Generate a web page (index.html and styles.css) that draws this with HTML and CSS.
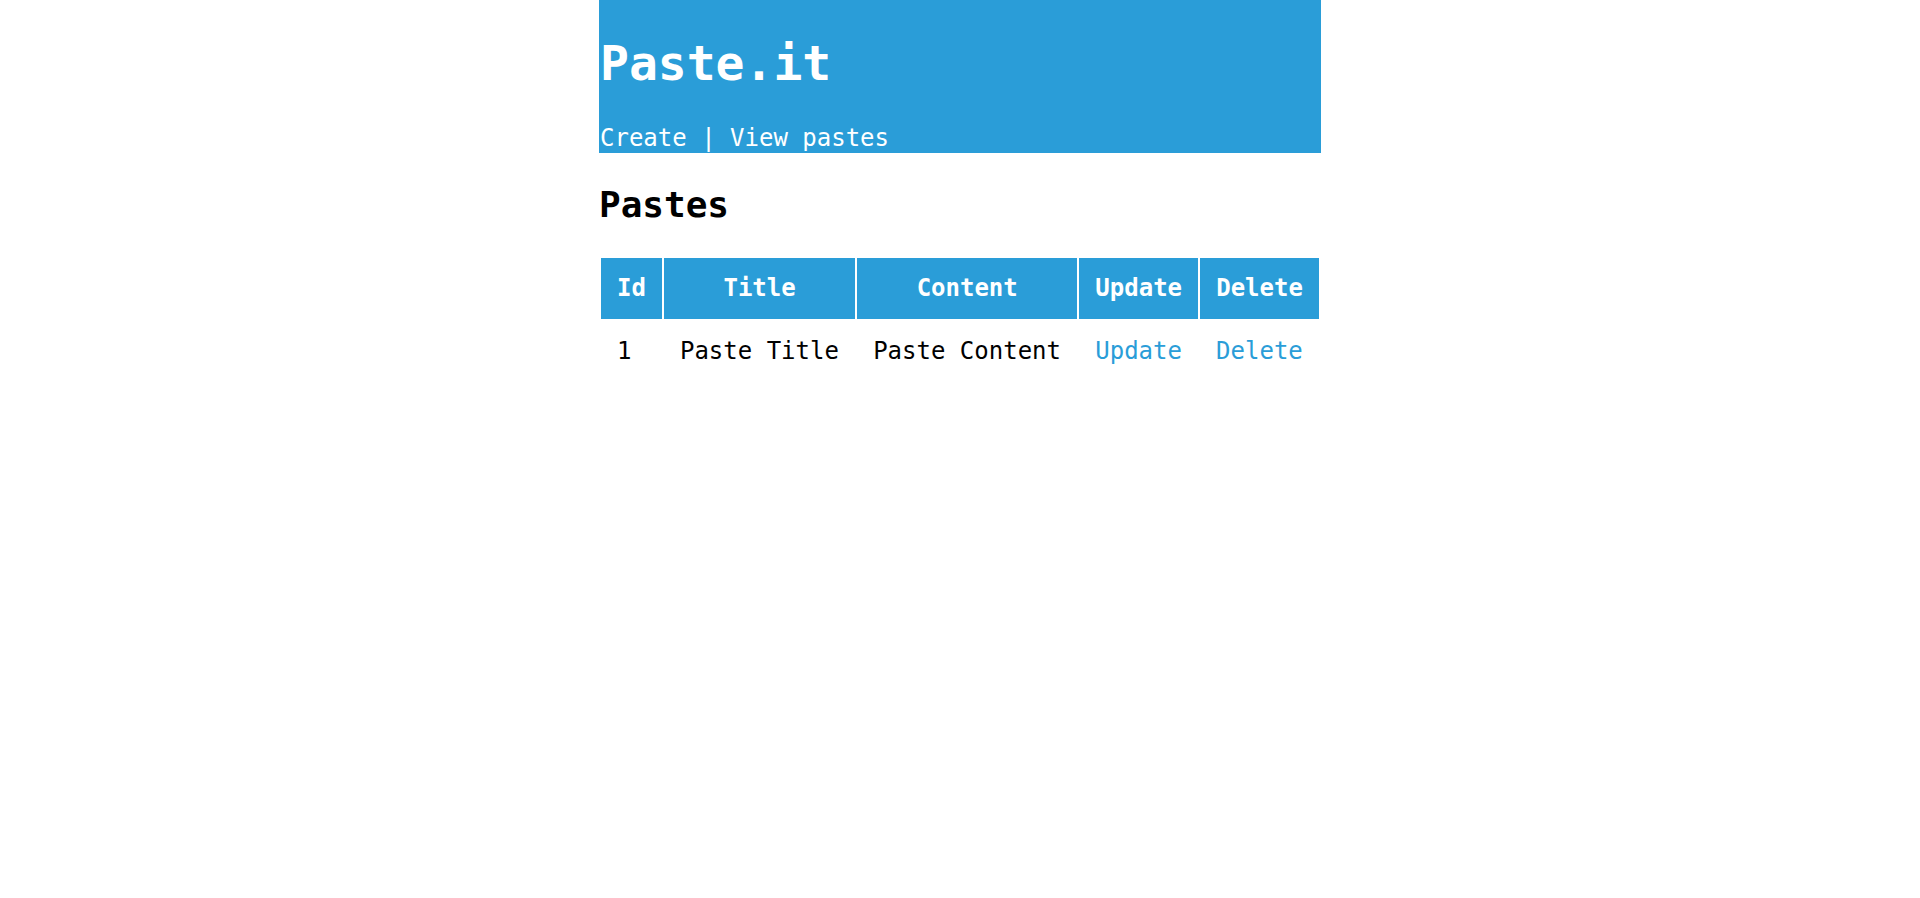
FILE: index.html
```html
<!DOCTYPE html>
<html lang="en">
<head>
<meta charset="utf-8">
<title>Paste.it</title>
<link rel="stylesheet" href="styles.css">
</head>
<body>
<div class="page">
  <header class="site-header">
    <h1 class="brand">Paste.it</h1>
    <nav class="nav"><a href="#">Create</a> | <a href="#">View pastes</a></nav>
  </header>
  <h2 class="section-title">Pastes</h2>
  <table class="pastes">
    <thead>
      <tr><th>Id</th><th>Title</th><th>Content</th><th>Update</th><th>Delete</th></tr>
    </thead>
    <tbody>
      <tr><td>1</td><td>Paste Title</td><td>Paste Content</td><td><a href="#">Update</a></td><td><a href="#">Delete</a></td></tr>
    </tbody>
  </table>
</div>
</body>
</html>
```

FILE: styles.css
```css
html, body {
  margin: 0;
  padding: 0;
  background: #ffffff;
}
body {
  font-family: "DejaVu Sans Mono", monospace;
  font-size: 24px;
  color: #000000;
}
.page {
  width: 722px;
  margin: 0 auto;
}
.site-header {
  background: #2a9dd8;
  color: #ffffff;
  padding: 3px 1px 1px 1px;
}
.brand {
  font-size: 48px;
  font-weight: bold;
  margin: 32px 0 33px 0;
  line-height: normal;
}
.nav {
  line-height: normal;
}
.nav a {
  color: #ffffff;
  text-decoration: none;
}
.section-title {
  font-size: 36px;
  font-weight: bold;
  margin: 31px 0 31px 0;
  line-height: normal;
}
.pastes {
  border-collapse: separate;
  border-spacing: 2px;
  width: 722px;
}
.pastes th {
  background: #2a9dd8;
  color: #ffffff;
  font-weight: bold;
  padding: 16px;
  line-height: 29px;
  text-align: center;
}
.pastes td {
  padding: 16px;
  line-height: 29px;
  text-align: left;
}
.pastes td a {
  color: #2a9dd8;
  text-decoration: none;
}
```
